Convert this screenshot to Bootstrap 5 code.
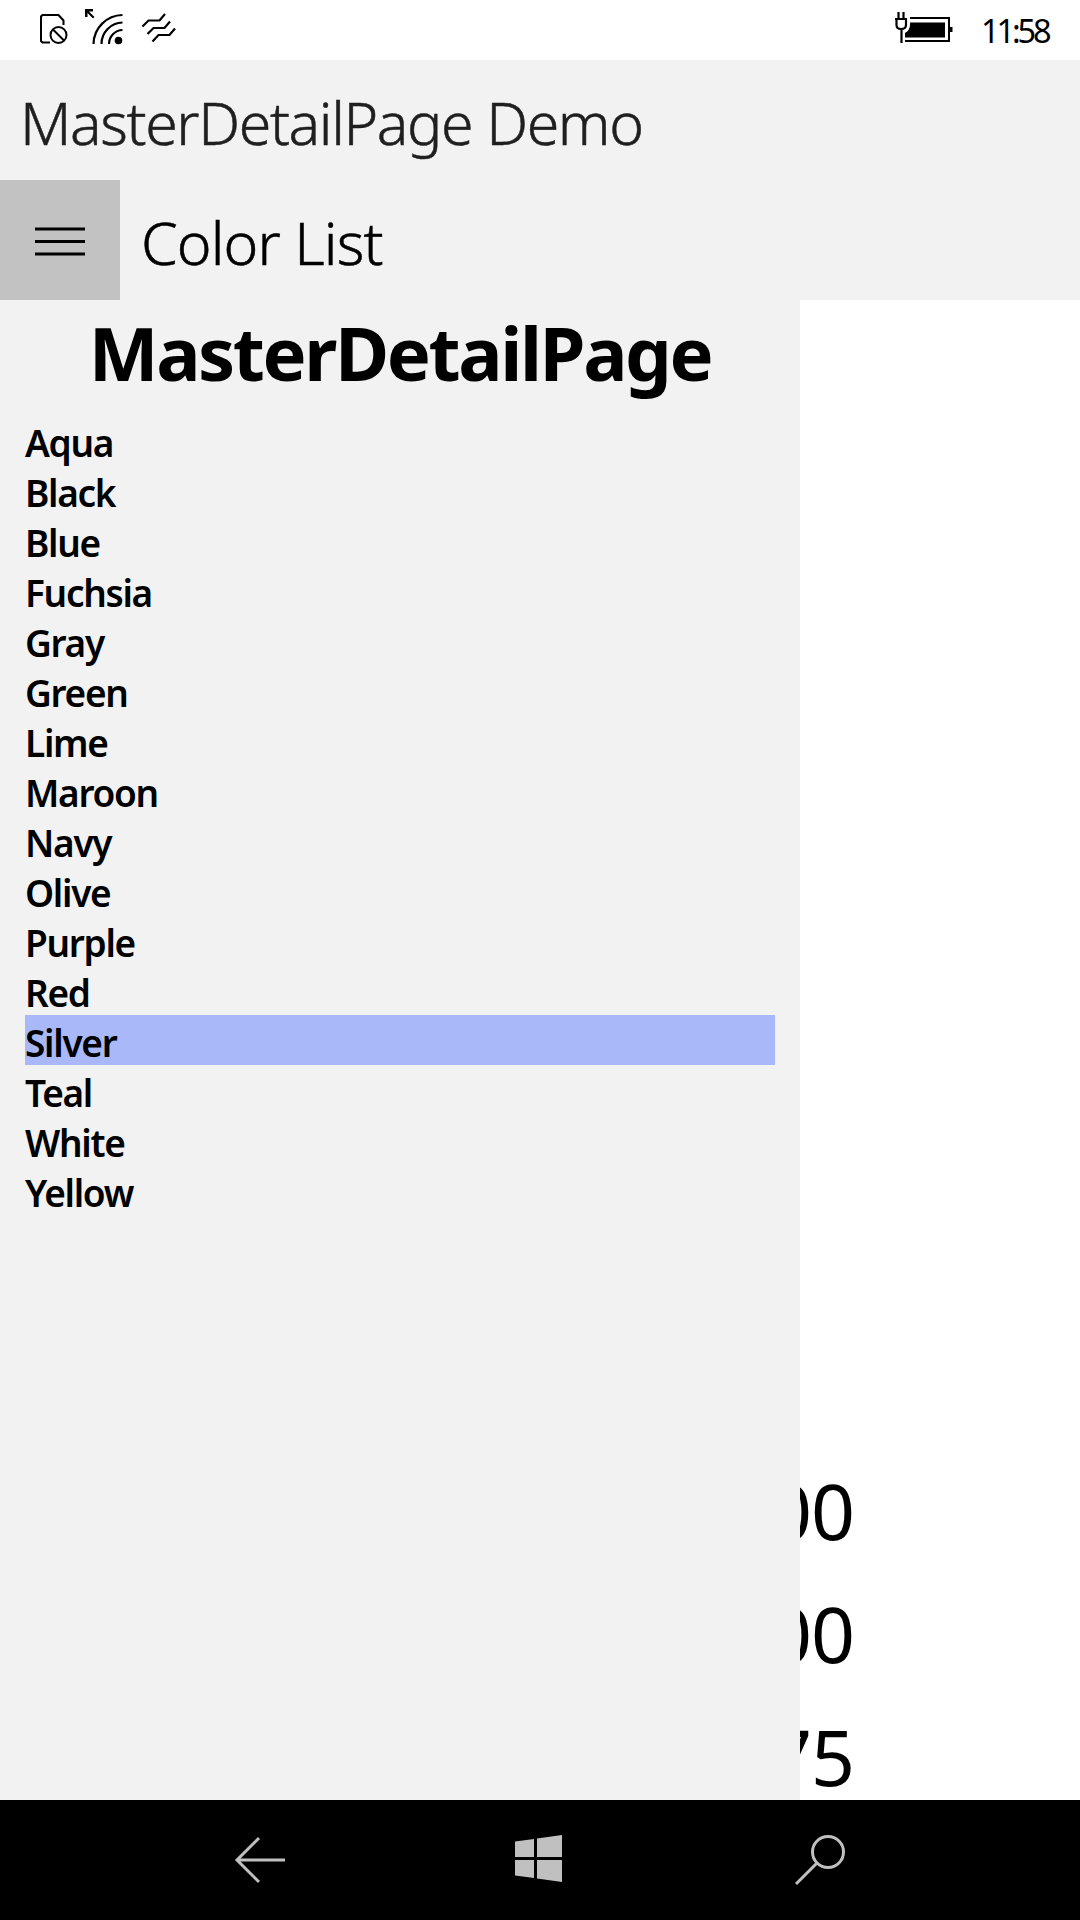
<!DOCTYPE html>
<html lang="en">
<head>
<meta charset="utf-8">
<meta name="viewport" content="width=device-width, initial-scale=1">
<title>MasterDetailPage Demo</title>
<link href="https://cdn.jsdelivr.net/npm/bootstrap@5.3.0/dist/css/bootstrap.min.css" rel="stylesheet">
<style>
  body { font-family: "Noto Sans", "Open Sans", sans-serif; color: #000; }
  .phone { width: 1080px; height: 1920px; }
  .statusbar { height: 60px; padding-left: 37px; }
  .clock { font-size: 32.5px; line-height: 61px; letter-spacing: -3.1px; margin-left: 27px; width: 99px; white-space: nowrap; }
  .panel-bg { background: #f2f2f2; }
  .titlebar { height: 120px; font-weight: 300; font-size: 59px; line-height: 124px; white-space: nowrap; -webkit-text-stroke: .5px currentColor; }
  .app-title { padding-left: 20px; color: #1f1f1f; letter-spacing: -1.4px; }
  .burger { width: 120px; height: 120px; background: #c2c2c2; }
  .page-title { padding-left: 21px; letter-spacing: -.9px; }
  .master { width: 800px; padding: 0 25px; }
  .master-head { height: 115px; font-size: 74px; font-weight: 700; line-height: 105px; letter-spacing: -2.4px; margin: 0; white-space: nowrap; }
  .master .list-group-item { height: 50px; padding: 2px 0 0; line-height: 52px; font-size: 37px; font-weight: 570; color: #000; background: transparent; letter-spacing: -1.3px; }
  .master .list-group .list-group-item.active { margin-top: 0; background: #a9b8f8; }
  .readout { font-size: 77px; line-height: 160px; height: 123px; width: 54px; letter-spacing: -1px; white-space: nowrap; }
  .master { position: relative; z-index: 1; }
  .navkeys { height: 120px; z-index: 1; }
</style>
<script src="https://cdn.jsdelivr.net/npm/bootstrap@5.3.0/dist/js/bootstrap.bundle.min.js"></script>
</head>
<body>
<div class="phone d-flex flex-column overflow-hidden bg-white">
  <div class="statusbar d-flex flex-shrink-0">
    <svg width="145" height="60" viewBox="37 0 145 60" fill="none" stroke="#000" stroke-width="2">
      <path d="M50 42.500H42.500L41 41V16.500L42.500 15H58.500L63.500 20.500V25"/>
      <circle cx="58.500" cy="35" r="8"/><path d="M53 29.500L64 40.500"/>
      <path d="M85 9H93V11.500H89L94.500 17L93 18.500L87.500 13V17H85Z" fill="#000" stroke="none"/>
      <path d="M93.500 44A29.500 29.500 0 0 1 122.500 15M101.500 44A21.500 21.500 0 0 1 122.500 22.500M109 44A14 14 0 0 1 122.500 30" stroke-width="2.200"/>
      <circle cx="118.500" cy="40.500" r="3.800" fill="#000" stroke="none"/>
      <path d="M142.500 26.500L148.500 20.500H159.500L165 14M147.500 34L153.500 28H164.500L170 21.500M152.500 41.500L158.500 35H169.500L175 28.500" stroke-width="2.200"/>
    </svg>
    <svg class="ms-auto" width="60" height="60" viewBox="894 0 60 60" fill="none" stroke="#000" stroke-width="2">
      <path d="M910 18H949V41H905"/>
      <path d="M910 22.500H945V37.500H905V33Q910 30 910 25Z" fill="#000" stroke="none"/>
      <path d="M949 27H952.500V32H949Z" fill="#000" stroke="none"/>
      <path d="M898.500 12V19M903.500 12V19M895 19H907M896.500 19V25Q896.500 29 901 29Q906 29 906 25V19M901.500 29V43" stroke-width="2.200"/>
    </svg>
    <div class="clock">11:58</div>
  </div>
  <header class="panel-bg flex-shrink-0">
    <div class="titlebar app-title d-flex"><span>MasterDetailPage Demo</span></div>
    <div class="titlebar d-flex">
      <div class="burger d-flex align-items-center justify-content-center">
        <svg width="50" height="32" viewBox="0 0 50 32" fill="none" stroke="#000" stroke-width="3"><path d="M0 5H50M0 17.500H50M0 30H50"/></svg>
      </div>
      <span class="page-title">Color List</span>
    </div>
  </header>
  <main class="d-flex flex-grow-1">
    <section class="master panel-bg flex-shrink-0">
      <h1 class="master-head d-flex justify-content-center">MasterDetailPage</h1>
      <div class="list-group list-group-flush">
        <div class="list-group-item border-0">Aqua</div>
        <div class="list-group-item border-0">Black</div>
        <div class="list-group-item border-0">Blue</div>
        <div class="list-group-item border-0">Fuchsia</div>
        <div class="list-group-item border-0">Gray</div>
        <div class="list-group-item border-0">Green</div>
        <div class="list-group-item border-0">Lime</div>
        <div class="list-group-item border-0">Maroon</div>
        <div class="list-group-item border-0">Navy</div>
        <div class="list-group-item border-0">Olive</div>
        <div class="list-group-item border-0">Purple</div>
        <div class="list-group-item border-0">Red</div>
        <div class="list-group-item border-0 active">Silver</div>
        <div class="list-group-item border-0">Teal</div>
        <div class="list-group-item border-0">White</div>
        <div class="list-group-item border-0">Yellow</div>
      </div>
    </section>
    <section class="d-flex flex-column justify-content-end">
      <div class="readout d-flex justify-content-end">00</div>
      <div class="readout d-flex justify-content-end">00</div>
      <div class="readout d-flex justify-content-end">75</div>
    </section>
  </main>
  <nav class="navkeys bg-black flex-shrink-0 d-flex">
    <svg width="1080" height="120" viewBox="0 1800 1080 120" fill="none" stroke="#c0c0c0" stroke-width="3">
      <path d="M285 1860H237M259 1838L237 1860L259 1882"/>
      <path d="M515 1841.500L534 1839V1857H515ZM537 1838.500L562 1835V1857H537ZM515 1860H534V1878L515 1875.500ZM537 1860H562V1882L537 1878.500Z" fill="#c0c0c0" stroke="none"/>
      <circle cx="828" cy="1852" r="15.500"/><path d="M817 1863L796 1884"/>
    </svg>
  </nav>
</div>
</body>
</html>
